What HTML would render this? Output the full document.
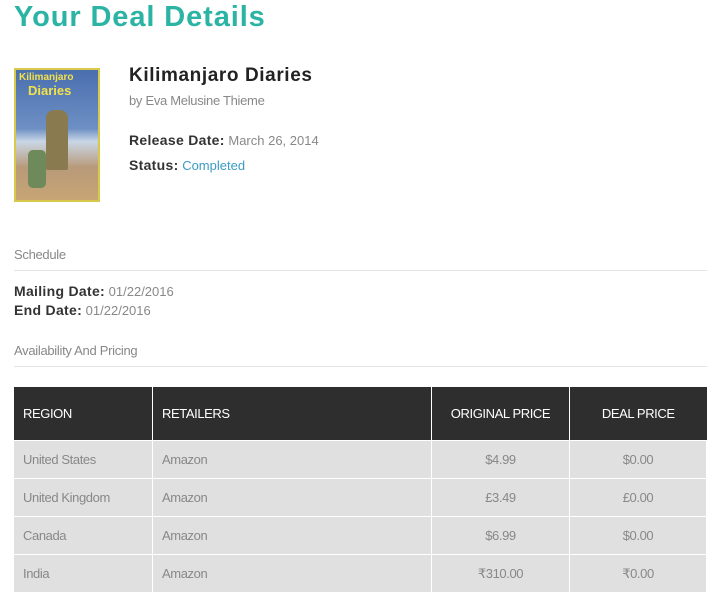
<!DOCTYPE html>
<html><head><style>
body{margin:0;background:#fff;font-family:"Liberation Sans Narrow","Liberation Sans",sans-serif;width:722px;height:603px;position:relative;overflow:hidden;color:#777}
.a{position:absolute;white-space:nowrap}
h1{position:absolute;left:14px;top:1px;margin:0;font:bold 29px "Liberation Sans",sans-serif;letter-spacing:0.9px;color:#2bb3a3}
.b{font-family:"Liberation Sans",sans-serif;font-weight:bold;color:#333}
.t{font-size:13px;color:#888;letter-spacing:-0.3px}
hr{position:absolute;left:14px;width:693px;border:0;border-top:1px solid #e4e4e4;margin:0}
table{position:absolute;left:14px;top:387px;width:693px;border-collapse:collapse;font-size:13px;letter-spacing:-0.4px}
th{background:#2e2e2e;color:#fff;font-weight:normal;height:53px;text-align:left;padding:0 0 0 9px;border-right:1px solid #fff}
td{background:#e0e0e0;color:#888;height:37px;padding:0 0 0 9px;border-right:1px solid #fff;border-top:1px solid #fff}
.c{text-align:center;padding:0}
</style></head><body>
<h1>Your Deal Details</h1>
<div class="a" style="left:14px;top:68px;width:82px;height:130px;border:2px solid #d8c94a;background:linear-gradient(#4a6fae 0%,#6d8fc4 45%,#c9d6e6 55%,#b89a7a 75%,#c7a574 100%)">
<div class="a" style="left:3px;top:2px;font:bold 10px 'Liberation Sans',sans-serif;color:#f2e24a">Kilimanjaro</div>
<div class="a" style="left:12px;top:13px;font:bold 13px 'Liberation Sans',sans-serif;color:#f2e24a">Diaries</div>
<div class="a" style="left:30px;top:40px;width:22px;height:60px;background:#8a7a50;border-radius:8px 8px 2px 2px"></div>
<div class="a" style="left:12px;top:80px;width:18px;height:38px;background:#6f8a5a;border-radius:5px"></div>
</div>
<div class="a b" style="left:129px;top:65px;font-size:19px;letter-spacing:0.6px;color:#222">Kilimanjaro Diaries</div>
<div class="a t" style="left:129px;top:93px;font-size:13px">by Eva Melusine Thieme</div>
<div class="a" style="left:129px;top:132px;font-size:13px"><span class="b" style="font-size:14px;letter-spacing:0.3px">Release Date:</span> <span style="color:#888">March 26, 2014</span></div>
<div class="a" style="left:129px;top:157px;font-size:13px"><span class="b" style="font-size:14px;letter-spacing:0.3px">Status:</span> <span style="color:#3a9cc4">Completed</span></div>
<div class="a t" style="left:14px;top:247px">Schedule</div>
<hr style="top:270px">
<div class="a" style="left:14px;top:283px;font-size:13px"><span class="b" style="font-size:14px;letter-spacing:0.3px">Mailing Date:</span> <span style="color:#888">01/22/2016</span></div>
<div class="a" style="left:14px;top:302px;font-size:13px"><span class="b" style="font-size:14px;letter-spacing:0.3px">End Date:</span> <span style="color:#888">01/22/2016</span></div>
<div class="a t" style="left:14px;top:343px">Availability And Pricing</div>
<hr style="top:366px">
<table>
<tr><th style="width:129px">REGION</th><th style="width:269px">RETAILERS</th><th class="c" style="width:137px">ORIGINAL PRICE</th><th class="c" style="border-right:0">DEAL PRICE</th></tr>
<tr><td>United States</td><td>Amazon</td><td class="c">$4.99</td><td class="c">$0.00</td></tr>
<tr><td>United Kingdom</td><td>Amazon</td><td class="c">£3.49</td><td class="c">£0.00</td></tr>
<tr><td>Canada</td><td>Amazon</td><td class="c">$6.99</td><td class="c">$0.00</td></tr>
<tr><td>India</td><td>Amazon</td><td class="c">₹310.00</td><td class="c">₹0.00</td></tr>
</table>
</body></html>
